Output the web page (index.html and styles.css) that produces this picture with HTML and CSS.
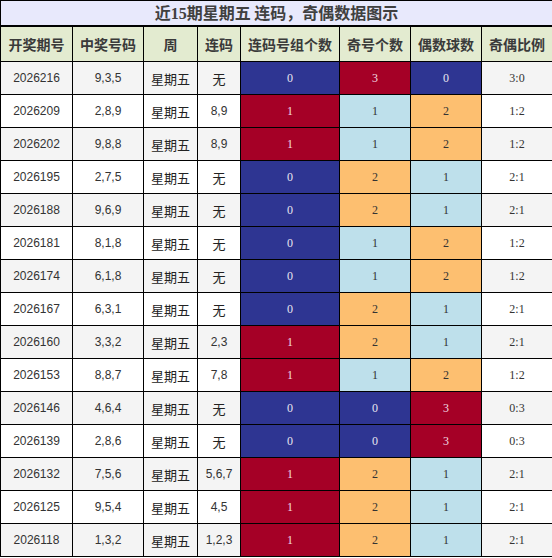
FILE: index.html
```html
<!DOCTYPE html>
<html lang="zh">
<head>
    <meta charset="UTF-8">
    <meta name="viewport" content="width=device-width, initial-scale=1.0">
    <title>近15期星期五 连码，奇偶数据图示</title>
    <link rel="stylesheet" href="styles.css">
</head>
<body>
    <table class="chart">
        <colgroup>
            <col class="c-qihao">
            <col class="c-haoma">
            <col class="c-zhou">
            <col class="c-lianma">
            <col class="c-zu">
            <col class="c-ji">
            <col class="c-ou">
            <col class="c-bi">
        </colgroup>
        <thead>
            <tr class="title-row">
                <th colspan="8"><span class="title">近<b class="num">15</b>期星期五 连码，奇偶数据图示</span></th>
            </tr>
            <tr class="head-row">
                <th>开奖期号</th>
                <th>中奖号码</th>
                <th>周</th>
                <th>连码</th>
                <th>连码号组个数</th>
                <th>奇号个数</th>
                <th>偶数球数</th>
                <th>奇偶比例</th>
            </tr>
        </thead>
        <tbody>
            <tr>
                <td class="sans">2026216</td><td class="sans">9,3,5</td><td class="cjk">星期五</td><td class="cjk">无</td>
                <td class="v-blue">0</td><td class="v-red">3</td><td class="v-blue">0</td><td class="ratio">3:0</td>
            </tr>
            <tr>
                <td class="sans">2026209</td><td class="sans">2,8,9</td><td class="cjk">星期五</td><td class="sans">8,9</td>
                <td class="v-red">1</td><td class="v-light">1</td><td class="v-orange">2</td><td class="ratio">1:2</td>
            </tr>
            <tr>
                <td class="sans">2026202</td><td class="sans">9,8,8</td><td class="cjk">星期五</td><td class="sans">8,9</td>
                <td class="v-red">1</td><td class="v-light">1</td><td class="v-orange">2</td><td class="ratio">1:2</td>
            </tr>
            <tr>
                <td class="sans">2026195</td><td class="sans">2,7,5</td><td class="cjk">星期五</td><td class="cjk">无</td>
                <td class="v-blue">0</td><td class="v-orange">2</td><td class="v-light">1</td><td class="ratio">2:1</td>
            </tr>
            <tr>
                <td class="sans">2026188</td><td class="sans">9,6,9</td><td class="cjk">星期五</td><td class="cjk">无</td>
                <td class="v-blue">0</td><td class="v-orange">2</td><td class="v-light">1</td><td class="ratio">2:1</td>
            </tr>
            <tr>
                <td class="sans">2026181</td><td class="sans">8,1,8</td><td class="cjk">星期五</td><td class="cjk">无</td>
                <td class="v-blue">0</td><td class="v-light">1</td><td class="v-orange">2</td><td class="ratio">1:2</td>
            </tr>
            <tr>
                <td class="sans">2026174</td><td class="sans">6,1,8</td><td class="cjk">星期五</td><td class="cjk">无</td>
                <td class="v-blue">0</td><td class="v-light">1</td><td class="v-orange">2</td><td class="ratio">1:2</td>
            </tr>
            <tr>
                <td class="sans">2026167</td><td class="sans">6,3,1</td><td class="cjk">星期五</td><td class="cjk">无</td>
                <td class="v-blue">0</td><td class="v-orange">2</td><td class="v-light">1</td><td class="ratio">2:1</td>
            </tr>
            <tr>
                <td class="sans">2026160</td><td class="sans">3,3,2</td><td class="cjk">星期五</td><td class="sans">2,3</td>
                <td class="v-red">1</td><td class="v-orange">2</td><td class="v-light">1</td><td class="ratio">2:1</td>
            </tr>
            <tr>
                <td class="sans">2026153</td><td class="sans">8,8,7</td><td class="cjk">星期五</td><td class="sans">7,8</td>
                <td class="v-red">1</td><td class="v-light">1</td><td class="v-orange">2</td><td class="ratio">1:2</td>
            </tr>
            <tr>
                <td class="sans">2026146</td><td class="sans">4,6,4</td><td class="cjk">星期五</td><td class="cjk">无</td>
                <td class="v-blue">0</td><td class="v-blue">0</td><td class="v-red">3</td><td class="ratio">0:3</td>
            </tr>
            <tr>
                <td class="sans">2026139</td><td class="sans">2,8,6</td><td class="cjk">星期五</td><td class="cjk">无</td>
                <td class="v-blue">0</td><td class="v-blue">0</td><td class="v-red">3</td><td class="ratio">0:3</td>
            </tr>
            <tr>
                <td class="sans">2026132</td><td class="sans">7,5,6</td><td class="cjk">星期五</td><td class="sans">5,6,7</td>
                <td class="v-red">1</td><td class="v-orange">2</td><td class="v-light">1</td><td class="ratio">2:1</td>
            </tr>
            <tr>
                <td class="sans">2026125</td><td class="sans">9,5,4</td><td class="cjk">星期五</td><td class="sans">4,5</td>
                <td class="v-red">1</td><td class="v-orange">2</td><td class="v-light">1</td><td class="ratio">2:1</td>
            </tr>
            <tr>
                <td class="sans">2026118</td><td class="sans">1,3,2</td><td class="cjk">星期五</td><td class="sans">1,2,3</td>
                <td class="v-red">1</td><td class="v-orange">2</td><td class="v-light">1</td><td class="ratio">2:1</td>
            </tr>
        </tbody>
    </table>
</body>
</html>
```

FILE: styles.css
```css
body {
    margin: 0;
    padding: 0;
    background-color: #ffffff;
    font-family: "Liberation Sans", "Noto Sans CJK SC", sans-serif;
}
.chart {
    width: 552px;
    table-layout: fixed;
    border-collapse: collapse;
    color: #333333;
}
.c-qihao { width: 72px; }
.c-haoma { width: 71px; }
.c-zhou { width: 54px; }
.c-lianma { width: 43px; }
.c-zu { width: 99px; }
.c-ji { width: 71px; }
.c-ou { width: 71px; }
.c-bi { width: 71px; }

.chart th, .chart td {
    border: 1px solid #000000;
    padding: 0;
    text-align: center;
    vertical-align: middle;
}
.title-row th {
    height: 24px;
    background-color: #e8e9fc;
    border-bottom: 2px solid #000000;
}
.title {
    display: inline-block;
    margin-top: -2px;
    font-family: "Noto Sans CJK SC", sans-serif;
    font-size: 16px;
    font-weight: bold;
    color: #404040;
}
.title .num {
    font-family: "Liberation Serif", serif;
}
.head-row th {
    height: 34px;
    background-color: #e3ebd0;
    font-family: "Noto Sans CJK SC", sans-serif;
    font-size: 14px;
    font-weight: bold;
    color: #3a3a3a;
}
.chart tbody tr {
    background-color: #f4f4f4;
}
.chart tbody tr:nth-child(even) {
    background-color: #ffffff;
}
.chart tbody td {
    height: 32px;
}
.sans {
    font-size: 12px;
}
.cjk {
    font-family: "Noto Sans CJK SC", sans-serif;
    font-size: 13px;
    padding-top: 3px;
    color: #222222;
}
.ratio, .v-blue, .v-red, .v-light, .v-orange {
    font-family: "Liberation Serif", serif;
    font-size: 12px;
}
.v-blue {
    background-color: #2e3592;
    color: #e6e6f0;
}
.v-red {
    background-color: #a50026;
    color: #f0dde2;
}
.v-light {
    background-color: #bee0eb;
    color: #333333;
}
.v-orange {
    background-color: #fdbf70;
    color: #333333;
}
```
